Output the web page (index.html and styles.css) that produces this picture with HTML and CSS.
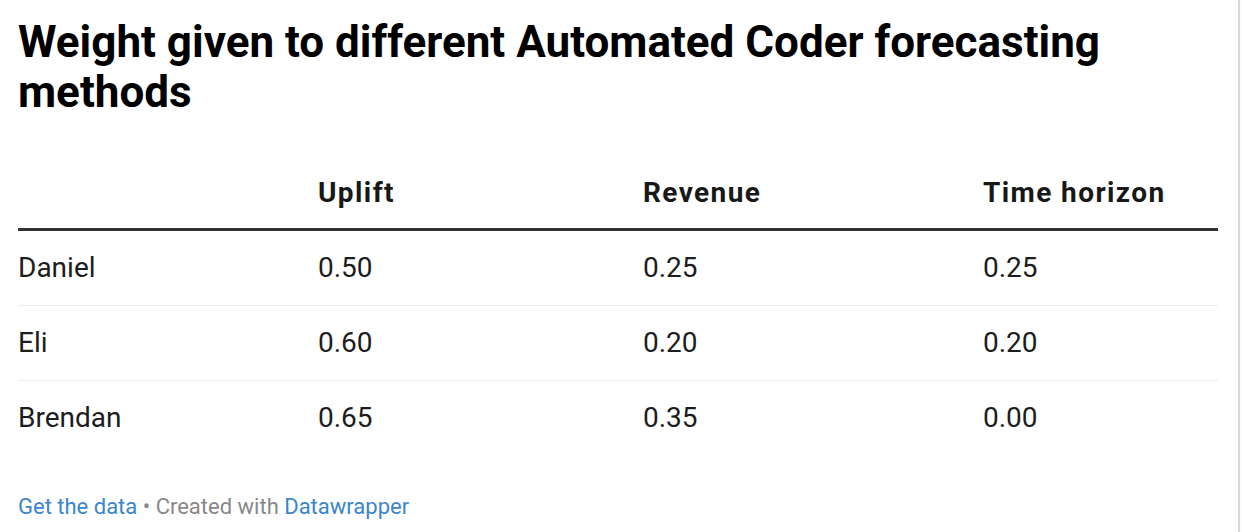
FILE: index.html
```html
<!DOCTYPE html>
<html lang="en">
<head>
<meta charset="utf-8">
<title>Weight given to different Automated Coder forecasting methods</title>
<link rel="stylesheet" href="styles.css">
</head>
<body>
<div class="frame">
  <h1 class="title">Weight given to different Automated Coder forecasting methods</h1>
  <div class="table">
    <div class="row head">
      <div class="cell"></div>
      <div class="cell">Uplift</div>
      <div class="cell">Revenue</div>
      <div class="cell">Time horizon</div>
    </div>
    <div class="row">
      <div class="cell">Daniel</div>
      <div class="cell">0.50</div>
      <div class="cell">0.25</div>
      <div class="cell">0.25</div>
    </div>
    <div class="row">
      <div class="cell">Eli</div>
      <div class="cell">0.60</div>
      <div class="cell">0.20</div>
      <div class="cell">0.20</div>
    </div>
    <div class="row last">
      <div class="cell">Brendan</div>
      <div class="cell">0.65</div>
      <div class="cell">0.35</div>
      <div class="cell">0.00</div>
    </div>
  </div>
  <div class="footer"><a class="link" href="#">Get the data</a><span class="sep"> • </span><span class="muted">Created with </span><a class="link" href="#">Datawrapper</a></div>
</div>
</body>
</html>
```
FILE: styles.css
```css
html {
  background: #fcfcfc;
}
body {
  margin: 0;
  font-family: Roboto, "Liberation Sans", Arial, sans-serif;
  color: #1d1d1d;
}
.frame {
  box-sizing: border-box;
  width: 1240px;
  height: 532px;
  background: #ffffff;
  border-right: 2px solid #d9d9d9;
  padding: 17px 0 0 18px;
}
.title {
  margin: 0;
  font-size: 44px;
  line-height: 50px;
  font-weight: 700;
  color: #000;
}
.table {
  width: 1200px;
  margin-top: 61px;
}
.row {
  display: grid;
  grid-template-columns: 300px 325px 340px 235px;
  font-size: 28px;
  line-height: 30px;
  padding: 22px 0 22px;
  border-bottom: 1px solid #ebebeb;
}
.row.head {
  padding: 0 0 20px;
  font-weight: 700;
  color: #181818;
  letter-spacing: 1.4px;
  border-bottom: 3px solid #333333;
}
.row.last {
  border-bottom: none;
}
.footer {
  margin-top: 40px;
  font-size: 22px;
  line-height: 24px;
}
.link {
  color: #3a86c8;
  text-decoration: none;
}
.muted, .sep {
  color: #888888;
}
```
